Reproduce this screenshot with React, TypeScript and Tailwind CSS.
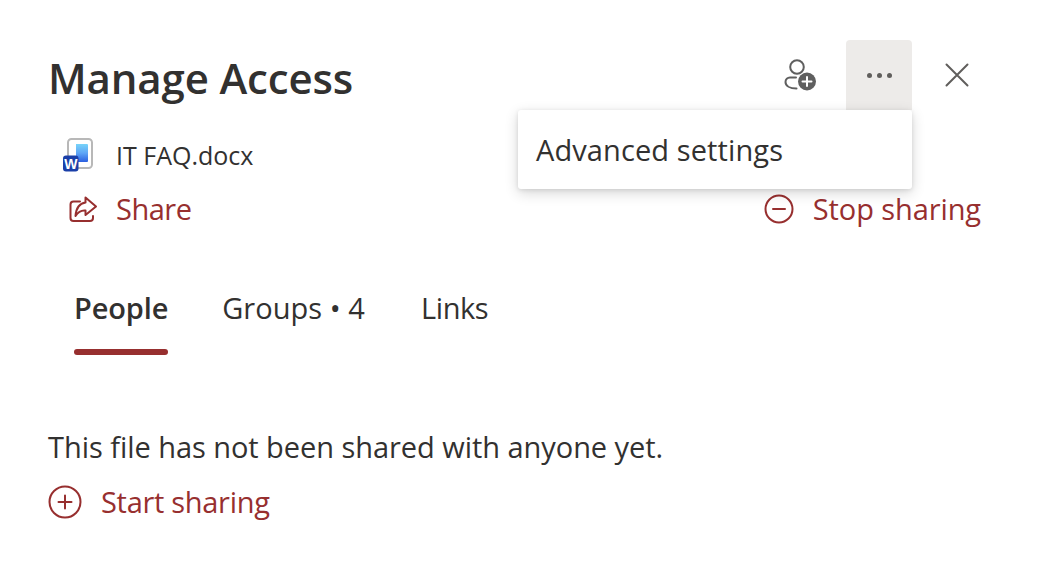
const font = { fontFamily: '"Open Sans", "Noto Sans", sans-serif' };

function WordIcon() {
  return (
    <svg width="34" height="36" viewBox="0 0 34 36" className="shrink-0">
      <defs>
        <linearGradient id="wordFill" x1="0" y1="0" x2="0" y2="1">
          <stop offset="0" stopColor="#78d4f9" />
          <stop offset="0.5" stopColor="#5fa6f6" />
          <stop offset="1" stopColor="#2b5fe0" />
        </linearGradient>
      </defs>
      <rect x="6" y="2" width="24" height="29" rx="3.5" fill="#fff" stroke="#b8b8b8" strokeWidth="2" />
      <path d="M14 7h11a1 1 0 0 1 1 1v16a1 1 0 0 1-1 1H14z" fill="url(#wordFill)" />
      <rect x="1" y="18.5" width="15.5" height="16" rx="3" fill="#1a3fa8" />
      <text x="8.75" y="31.5" textAnchor="middle" fontSize="14" fontWeight="700" fill="#fff" fontFamily="Liberation Sans">W</text>
    </svg>
  );
}

function ShareIcon() {
  return (
    <svg width="30" height="30" viewBox="0 0 30 30" fill="none" stroke="#972f2f" strokeWidth="2" strokeLinejoin="round" strokeLinecap="round">
      <path d="M12 7.5H5.5a3 3 0 0 0-3 3V24a3 3 0 0 0 3 3H22a3 3 0 0 0 3-3v-2" />
      <path d="M17.5 3.5 L28 12.5 L17.5 21 V16.5 C13 16 10 18 7.5 22 C8 15 11 9.5 17.5 8.5 Z" />
    </svg>
  );
}

function MinusCircleIcon() {
  return (
    <svg width="30" height="30" viewBox="0 0 30 30" fill="none" stroke="#972f2f" strokeWidth="2" strokeLinecap="round">
      <circle cx="15" cy="15" r="13.5" />
      <path d="M9 15h12" />
    </svg>
  );
}

function PlusCircleIcon() {
  return (
    <svg width="34" height="34" viewBox="0 0 34 34" fill="none" stroke="#972f2f" strokeWidth="2" strokeLinecap="round">
      <circle cx="17" cy="17" r="15.5" />
      <path d="M10.5 17h13M17 10.5v13" />
    </svg>
  );
}

function AddPersonIcon() {
  return (
    <svg width="36" height="36" viewBox="0 0 36 36" fill="none">
      <circle cx="15" cy="10" r="6.8" stroke="#5f5f5f" strokeWidth="2" />
      <path d="M14 20.5H8a4.5 4.5 0 0 0-4.5 4.5c0 4 4.5 6.5 11 6.5" stroke="#5f5f5f" strokeWidth="2" strokeLinecap="round" />
      <circle cx="25" cy="24.5" r="9" fill="#5f5f5f" />
      <path d="M25 20v9M20.5 24.5h9" stroke="#fff" strokeWidth="2" strokeLinecap="round" />
    </svg>
  );
}

export default function App() {
  return (
    <div className="relative w-[1040px] h-[572px] bg-white text-[#323130] overflow-hidden pl-[49px] pr-[58px]" style={font}>
      <div className="flex items-start justify-between h-[110px] pt-[40px]">
        <h1 className="-ml-[1px] text-[42px] leading-[75px] font-semibold tracking-[-0.15px]">Manage Access</h1>
        <div className="flex items-center h-[70px] mr-[13px]">
          <AddPersonIcon />
          <div className="w-[66px] h-[70px] ml-[28px] rounded-t-[4px] bg-[#edebe9] flex items-center justify-center gap-[5px]">
            <span className="w-[5px] h-[5px] rounded-full bg-[#605e5c]" />
            <span className="w-[5px] h-[5px] rounded-full bg-[#605e5c]" />
            <span className="w-[5px] h-[5px] rounded-full bg-[#605e5c]" />
          </div>
          <svg width="24" height="24" viewBox="0 0 24 24" className="ml-[33px]" stroke="#605e5c" strokeWidth="2" strokeLinecap="round">
            <path d="M1.5 1.5l21 21M22.5 1.5l-21 21" />
          </svg>
        </div>
      </div>

      <div className="flex items-center gap-[20px] h-[50px] mt-[20px] pl-[13px]">
        <WordIcon />
        <span className="text-[25px] leading-[32px]">IT FAQ.docx</span>
      </div>

      <div className="flex items-center justify-between h-[50px] mt-[4px] pr-[1px] text-[#972f2f] text-[29px]">
        <div className="flex items-center gap-[18px] pl-[19px]">
          <ShareIcon />
          <span className="tracking-[-0.5px]">Share</span>
        </div>
        <div className="flex items-center gap-[19px]">
          <MinusCircleIcon />
          <span className="tracking-[-0.1px]">Stop sharing</span>
        </div>
      </div>

      <div className="flex mt-[48px] pl-[25px] text-[29px] h-[80px]">
        <div className="relative h-[73px] pt-[4px]">
          <span className="font-semibold tracking-[-0.15px]">People</span>
          <div className="absolute left-0 right-0 bottom-0 h-[6px] rounded-[3px] bg-[#972f2f]" />
        </div>
        <span className="pt-[4px] ml-[54px] tracking-[0.05px]">Groups • 4</span>
        <span className="pt-[4px] ml-[56px] tracking-[-0.4px]">Links</span>
      </div>

      <p className="-ml-[1px] mt-[64px] text-[29px] leading-[41px] tracking-[-0.05px]">This file has not been shared with anyone yet.</p>

      <div className="flex items-center gap-[19px] mt-[13px] -ml-[1px] text-[#972f2f] text-[29px] tracking-[-0.3px]">
        <PlusCircleIcon />
        <span>Start sharing</span>
      </div>

      <div className="absolute left-[518px] top-[110px] w-[394px] h-[79px] rounded-[3px] bg-white flex items-center pl-[18px] text-[29px] tracking-[0.1px] shadow-[0_4px_14px_rgba(0,0,0,0.16),0_1px_4px_rgba(0,0,0,0.1)]">
        Advanced settings
      </div>
    </div>
  );
}
